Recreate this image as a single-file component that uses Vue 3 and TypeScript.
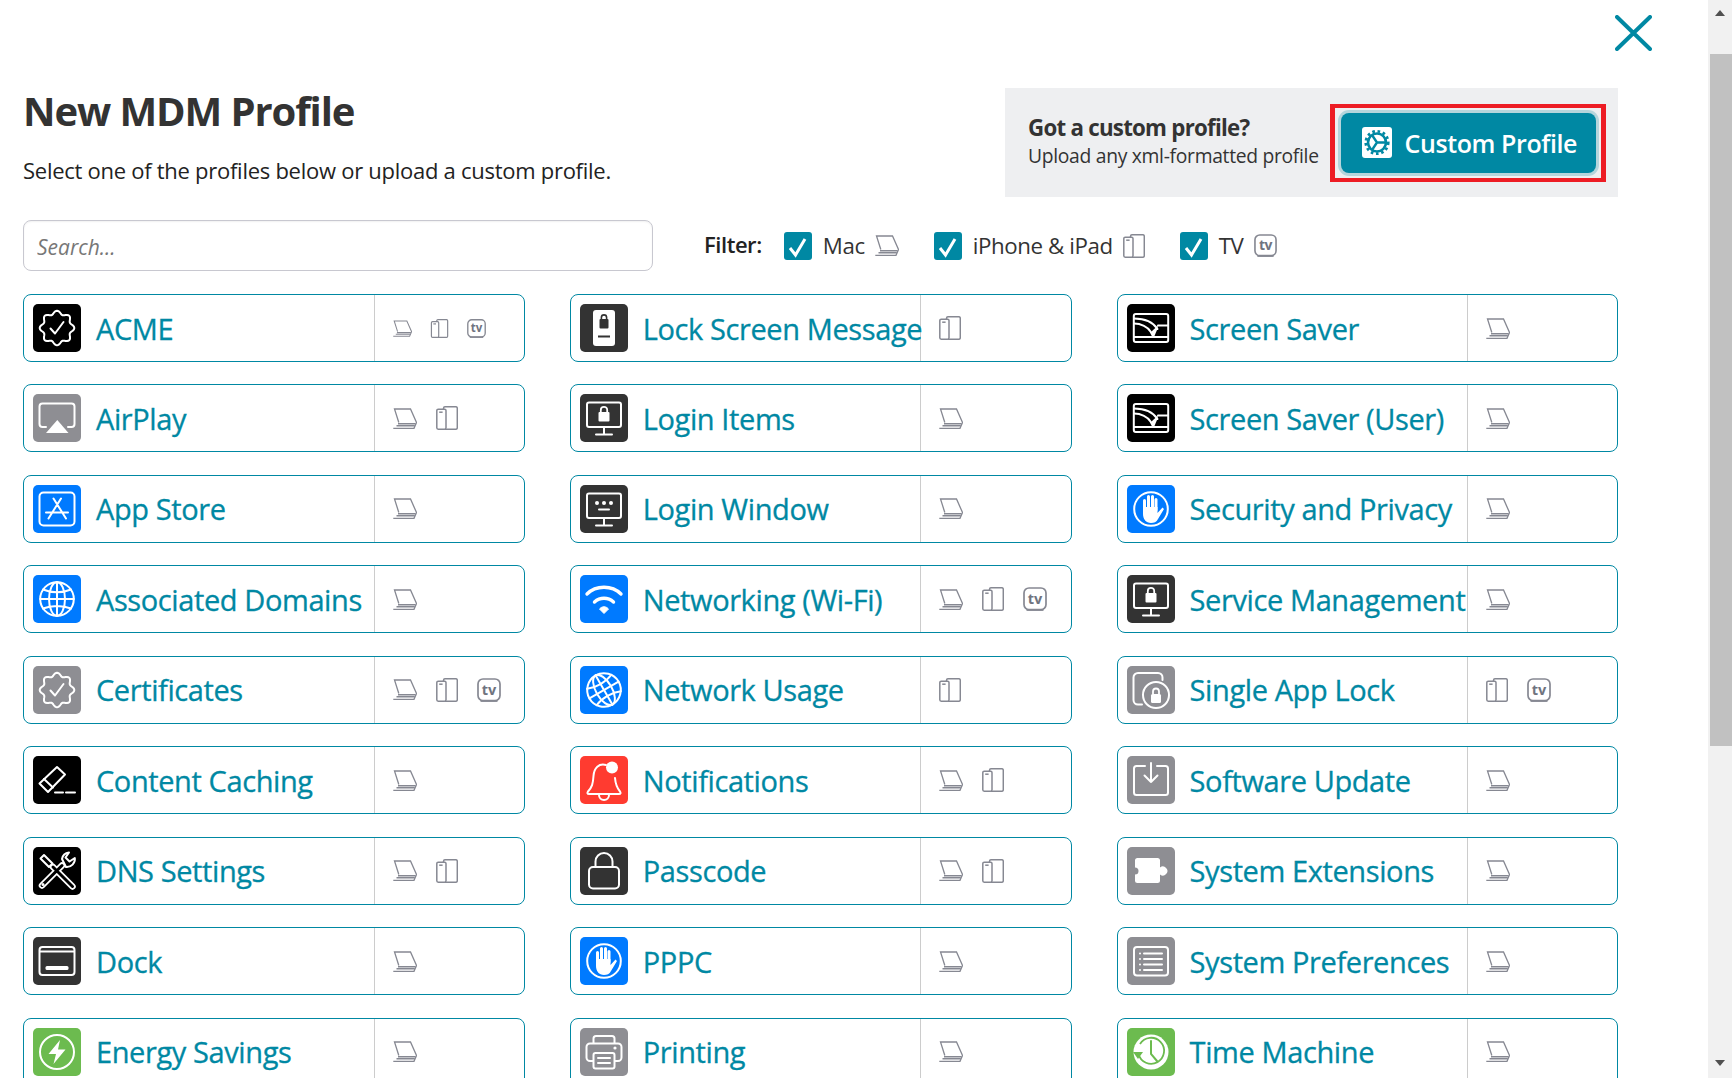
<template>
  <div class="page">
    <main class="main">
      <div class="close-row">
        <svg class="close" viewBox="0 0 37 36" fill="none" stroke="#0088a3" stroke-width="4" stroke-linecap="round">
          <path d="M2 2L35 34M35 2L2 34" />
        </svg>
      </div>

      <header class="head">
        <div class="head-text">
          <h1>New MDM Profile</h1>
          <p>Select one of the profiles below or upload a custom profile.</p>
        </div>
        <div class="promo">
          <div class="promo-text">
            <strong>Got a custom profile?</strong>
            <span>Upload any xml-formatted profile</span>
          </div>
          <div class="promo-mark">
            <button class="custom-btn" type="button">
              <svg class="gear" viewBox="0 0 30 31">
                <rect width="30" height="31" rx="3" fill="#fff" />
                <circle cx="15" cy="15.5" r="9" fill="none" stroke="#0088a3" stroke-width="2.6" />
                <circle cx="15" cy="15.5" r="11.2" fill="none" stroke="#0088a3" stroke-width="2.8" stroke-dasharray="2.6 2.7" />
                <path d="M10 8L15 15.5L10 23M15 15.5H24" fill="none" stroke="#0088a3" stroke-width="2.4" />
              </svg>
              Custom Profile
            </button>
          </div>
        </div>
      </header>

      <section class="filters">
        <input class="search" type="text" placeholder="Search..." />
        <span class="filter-label">Filter:</span>
        <label v-for="f in filters" :key="f.label" class="filter">
          <svg class="check" viewBox="0 0 28 28">
            <rect width="28" height="28" rx="3" fill="#0088a3" />
            <path d="M6 16L11.5 23L21 7" fill="none" stroke="#fff" stroke-width="3" />
          </svg>
          <span class="filter-name">{{ f.label }}</span>
          <svg class="device" :class="'device-' + f.device" :viewBox="deviceBox[f.device]" v-html="deviceArt[f.device]" />
        </label>
      </section>

      <section class="grid">
        <div v-for="p in profiles" :key="p.name" class="card">
          <div class="card-main">
            <svg class="tile" viewBox="0 0 48 48" :style="{ background: tileColors[p.tile] }" v-html="glyphs[p.glyph]" />
            <span class="card-name">{{ p.name }}</span>
          </div>
          <div class="card-devices" :class="{ small: p.small }">
            <svg
              v-for="d in p.devices"
              :key="d"
              class="device"
              :class="'device-' + d"
              :viewBox="deviceBox[d]"
              v-html="deviceArt[d]"
            />
          </div>
        </div>
      </section>
    </main>

    <aside class="scrollbar">
      <div class="arrow up" />
      <div class="thumb" />
      <div class="rest" />
      <div class="arrow down" />
    </aside>
  </div>
</template>

<script setup lang="ts">
type Device = 'mac' | 'phone' | 'tv';
type Tile = 'black' | 'dark' | 'gray' | 'blue' | 'green' | 'red';

interface Profile {
  name: string;
  glyph: string;
  tile: Tile;
  devices: Device[];
  small?: boolean;
}

const tileColors: Record<Tile, string> = {
  black: '#000000',
  dark: '#333333',
  gray: '#8e8e93',
  blue: '#007aff',
  green: '#6cbb4f',
  red: '#ff3b30',
};

const filters: { label: string; device: Device }[] = [
  { label: 'Mac', device: 'mac' },
  { label: 'iPhone & iPad', device: 'phone' },
  { label: 'TV', device: 'tv' },
];

const deviceBox: Record<Device, string> = {
  mac: '0 0 24 21',
  phone: '0 0 22 24',
  tv: '0 0 24 24',
};

const deviceArt: Record<Device, string> = {
  mac: `<g fill="none" stroke="#868892" stroke-width="1.3">
    <path d="M5.8 14.5L1.5 1H17.5L23.5 14.5L21 20.3H.3"/>
    <path d="M5 15.8H22.6M3.5 17.8H21.8" stroke-width="1.5"/>
  </g>`,
  phone: `<g fill="none" stroke="#868892" stroke-width="1.5">
    <path d="M7.5 3V2.2A1.5 1.5 0 0 1 9 .8H20A1.5 1.5 0 0 1 21.3 2.2V21.8A1.5 1.5 0 0 1 20 23.2H9"/>
    <rect x=".8" y="3.2" width="9.2" height="20" rx="1.4"/>
    <path d="M3.2 6.2H6.6"/>
  </g>`,
  tv: `<rect x="1" y="1" width="22" height="21.6" rx="5" fill="#fff" stroke="#868892" stroke-width="1.7"/>
    <path d="M3.5 23H20.5" stroke="#868892" stroke-width="1.8"/>
    <text x="12" y="16.5" text-anchor="middle" font-family="Open Sans, sans-serif" font-weight="700" font-size="14.5" fill="#6f7480">tv</text>`,
};

// scalloped badge for ACME / Certificates
function badgePath(): string {
  const pts: string[] = [];
  for (let i = 0; i <= 96; i++) {
    const a = (i / 96) * Math.PI * 2;
    const r = 15.6 + 1.7 * Math.cos(8 * a);
    const x = 24 + r * Math.sin(a);
    const y = 24 - r * Math.cos(a);
    pts.push(`${x.toFixed(2)} ${y.toFixed(2)}`);
  }
  return `M${pts.join('L')}Z`;
}

const w = 'fill="none" stroke="#fff" stroke-width="2" stroke-linecap="round" stroke-linejoin="round"';

const monitor = `<rect x="7" y="8.5" width="34" height="24.5" rx="2" ${w}/>
  <path d="M24 33V40M16 40.5H32" ${w} stroke-width="2.4"/>`;
const lockSmall = `<rect x="18.5" y="18" width="11" height="9.5" rx="1" fill="#fff"/>
  <path d="M20.8 18V16a3.2 3.2 0 0 1 6.4 0V18" fill="none" stroke="#fff" stroke-width="1.8"/>`;
const hand = `<circle cx="24" cy="24" r="16.8" ${w}/>
  <path d="M17.5 26V15.5M21.5 24V11.5M25.5 24V11.5M29 25V14.5" fill="none" stroke="#fff" stroke-width="3" stroke-linecap="round"/>
  <path d="M16 22H30.5V28L35.5 22.5L37 24L31 34C29.5 37 27 38 24 38C19 38 16 34 16 29Z" fill="#fff"/>`;
const screenSaver = `<rect x="6.8" y="10" width="34.4" height="28" rx="2" ${w}/>
  <path d="M7 33H41M31 21.5H41" ${w}/>
  <path d="M7 14.5C17 14.5 26 18 30.5 25M7 19.5C14 19.5 21 23 23.5 27.5L26.5 33" ${w}/>
  <path d="M31 21.5L30 26L27 33L24 28Z" fill="#fff"/>`;

const globeLines = `<circle cx="24" cy="24" r="16.8"/><ellipse cx="24" cy="24" rx="8" ry="16.8"/>
  <path d="M24 7V41M7.2 24H40.8M10 14.5C18 18 30 18 38 14.5M10 33.5C18 30 30 30 38 33.5"/>`;

const glyphs: Record<string, string> = {
  badge: `<path d="${badgePath()}" ${w}/><path d="M17.5 24.5L22 29.5L30.5 18" ${w} stroke-width="2.2"/>`,
  airplay: `<path d="M13 33H9.5A3 3 0 0 1 6.5 30V12.5A3 3 0 0 1 9.5 9.5H38.5A3 3 0 0 1 41.5 12.5V30A3 3 0 0 1 38.5 33H35" ${w}/>
    <path d="M24.3 26L35.5 39H13Z" fill="#fff"/>`,
  appstore: `<rect x="6.5" y="7.5" width="35" height="33" rx="4" ${w}/>
    <path d="M20.5 13.5L33 33.5M28 13.5L15.5 33.5M13 27.5H35" ${w} stroke-width="2.4"/>`,
  globe: `<g ${w} stroke-width="1.8">${globeLines}</g>`,
  netglobe: `<g ${w} stroke-width="1.8" transform="rotate(-30 24 24)">${globeLines}</g>`,
  eraser: `<path d="M6.5 27.5L24 11L32 18.5L15 36Z" ${w} />
    <path d="M11 23L20 31.5" ${w}/>
    <path d="M22 36.5H30M33 36.5H42" ${w}/>`,
  tools: `<path d="M9 38.5L29 18.5M39.5 39.5L20 20" fill="none" stroke="#fff" stroke-width="6.5" stroke-linecap="round"/>
    <path d="M11 8L7.5 11.5L16 20L19.5 16.5Z" fill="#000" stroke="#fff" stroke-width="2" stroke-linejoin="round"/>
    <path d="M29 12A8 8 0 0 1 36 5.5L32.5 10.5L36.5 14.5L41.8 11A8 8 0 0 1 33 20Z" fill="#000" stroke="#fff" stroke-width="2" stroke-linejoin="round"/>
    <path d="M9 38.5L29 18.5M39.5 39.5L20 20" fill="none" stroke="#000" stroke-width="3" stroke-linecap="round"/>
    <circle cx="10" cy="37.5" r="1.5" fill="#fff"/>`,
  dock: `<rect x="6.5" y="10" width="35" height="28" rx="3" ${w} stroke-width="2.2"/>
    <path d="M7 14.5H41" ${w} stroke-width="1.6"/>
    <rect x="12.5" y="29" width="23" height="4" rx="1.5" fill="#fff"/>`,
  energy: `<circle cx="24" cy="24" r="17" ${w} stroke-width="2.2"/>
    <path d="M27 12L15.5 26H23L20.5 36L32.5 21.5H25Z" fill="#fff"/>`,
  lockscreen: `<rect x="13" y="6" width="22" height="36" rx="3" fill="#fff"/>
    <rect x="19.5" y="15" width="9" height="9.5" rx="1" fill="#333"/>
    <path d="M21.4 15.5V13.5a2.6 2.6 0 0 1 5.2 0V15.5" fill="none" stroke="#333" stroke-width="1.6"/>
    <path d="M18 32.5H30" stroke="#333" stroke-width="1.8"/>`,
  monitorlock: `${monitor}${lockSmall}`,
  monitorlogin: `${monitor}<circle cx="17" cy="18" r="2" fill="#fff"/><circle cx="24" cy="18" r="2" fill="#fff"/><circle cx="31" cy="18" r="2" fill="#fff"/>
    <path d="M19 24.5H29" ${w}/>`,
  wifi: `<path d="M7 19C16 10 32 10 41 19M14.5 27C20 22 28 22 33.5 27" fill="none" stroke="#fff" stroke-width="3.4" stroke-linecap="round"/>
    <path d="M19.5 34C22 31 26 31 28.5 34L24 38.5Z" fill="#fff" stroke="#fff" stroke-linejoin="round"/>`,
  bell: `<path d="M26 9C19 7 14 12 13.5 20C13 28 12 31 8 35.5Q6.5 38 9 38H39Q41.5 38 40 35.5C37 32 35.5 28 35 22" ${w}/>
    <path d="M19 39A5 5 0 0 0 29 39" ${w}/>
    <circle cx="32" cy="11.5" r="6" fill="#fff"/>`,
  passcode: `<rect x="9" y="20" width="30" height="21.5" rx="4" ${w} stroke-width="3"/>
    <path d="M15.5 19.5V14.5a8.5 8.5 0 0 1 17 0V19.5" ${w} stroke-width="3"/>`,
  hand,
  printer: `<path d="M13.5 15V10.5A2.5 2.5 0 0 1 16 8H32A2.5 2.5 0 0 1 34.5 10.5V15" ${w}/>
    <path d="M13 33H10A3.5 3.5 0 0 1 6.5 29.5V19A3.5 3.5 0 0 1 10 15.5H38A3.5 3.5 0 0 1 41.5 19V29.5A3.5 3.5 0 0 1 38 33H35" ${w}/>
    <rect x="13.5" y="25" width="21" height="15.5" rx="2" ${w}/>
    <path d="M18 30H30M18 35H30" ${w} stroke-width="1.8"/>
    <circle cx="35" cy="20" r="1.6" fill="#fff"/>`,
  screensaver: screenSaver,
  applock: `<path d="M15 38.5H11A4.5 4.5 0 0 1 6.5 34V11.5A4.5 4.5 0 0 1 11 7H31A4.5 4.5 0 0 1 35.5 11.5V14" ${w}/>
    <circle cx="29" cy="29" r="13" ${w}/>
    <rect x="24" y="28" width="10" height="9" rx="1.5" fill="#fff"/>
    <path d="M26 28V25.5a3 3 0 0 1 6 0V28" fill="none" stroke="#fff" stroke-width="1.8"/>`,
  update: `<path d="M18 10H9.5A2.5 2.5 0 0 0 7 12.5V36.5A2.5 2.5 0 0 0 9.5 39H38.5A2.5 2.5 0 0 0 41 36.5V12.5A2.5 2.5 0 0 0 38.5 10H30" ${w}/>
    <path d="M24 7V26M17.5 19.5L24 26L30.5 19.5" ${w}/>`,
  puzzle: `<path d="M10.5 11H30.5A2.5 2.5 0 0 1 33 13.5V20.5A4.5 4.5 0 1 1 33 27.5V33.5A2.5 2.5 0 0 1 30.5 36H10.5A2.5 2.5 0 0 1 8 33.5V27.5A3.5 3.5 0 1 0 8 20.5V13.5A2.5 2.5 0 0 1 10.5 11Z" fill="#fff"/>`,
  prefs: `<rect x="7" y="10" width="34" height="28.5" rx="3" ${w}/>
    <path d="M17 16.5H35M17 22H35M17 27.5H35M17 33H35" ${w} stroke-width="1.8"/>
    <path d="M13 16.5V16.6M13 22V22.1M13 27.5V27.6M13 33V33.1" ${w}/>`,
  timemachine: `<circle cx="24" cy="24" r="17.5" fill="#fff"/>
    <path d="M11.5 26A13 13 0 1 0 13 16" fill="none" stroke="#6cbb4f" stroke-width="1.8"/>
    <path d="M6 24H16L11 31Z" fill="#6cbb4f"/>
    <path d="M24 13V26L30 33" fill="none" stroke="#6cbb4f" stroke-width="2" stroke-linecap="round"/>`,
};

const profiles: Profile[] = [
  { name: 'ACME', glyph: 'badge', tile: 'black', devices: ['mac', 'phone', 'tv'], small: true },
  { name: 'AirPlay', glyph: 'airplay', tile: 'gray', devices: ['mac', 'phone'] },
  { name: 'App Store', glyph: 'appstore', tile: 'blue', devices: ['mac'] },
  { name: 'Associated Domains', glyph: 'globe', tile: 'blue', devices: ['mac'] },
  { name: 'Certificates', glyph: 'badge', tile: 'gray', devices: ['mac', 'phone', 'tv'] },
  { name: 'Content Caching', glyph: 'eraser', tile: 'black', devices: ['mac'] },
  { name: 'DNS Settings', glyph: 'tools', tile: 'black', devices: ['mac', 'phone'] },
  { name: 'Dock', glyph: 'dock', tile: 'dark', devices: ['mac'] },
  { name: 'Energy Savings', glyph: 'energy', tile: 'green', devices: ['mac'] },
  { name: 'Lock Screen Message', glyph: 'lockscreen', tile: 'dark', devices: ['phone'] },
  { name: 'Login Items', glyph: 'monitorlock', tile: 'dark', devices: ['mac'] },
  { name: 'Login Window', glyph: 'monitorlogin', tile: 'dark', devices: ['mac'] },
  { name: 'Networking (Wi-Fi)', glyph: 'wifi', tile: 'blue', devices: ['mac', 'phone', 'tv'] },
  { name: 'Network Usage', glyph: 'netglobe', tile: 'blue', devices: ['phone'] },
  { name: 'Notifications', glyph: 'bell', tile: 'red', devices: ['mac', 'phone'] },
  { name: 'Passcode', glyph: 'passcode', tile: 'dark', devices: ['mac', 'phone'] },
  { name: 'PPPC', glyph: 'hand', tile: 'blue', devices: ['mac'] },
  { name: 'Printing', glyph: 'printer', tile: 'gray', devices: ['mac'] },
  { name: 'Screen Saver', glyph: 'screensaver', tile: 'black', devices: ['mac'] },
  { name: 'Screen Saver (User)', glyph: 'screensaver', tile: 'black', devices: ['mac'] },
  { name: 'Security and Privacy', glyph: 'hand', tile: 'blue', devices: ['mac'] },
  { name: 'Service Management', glyph: 'monitorlock', tile: 'dark', devices: ['mac'] },
  { name: 'Single App Lock', glyph: 'applock', tile: 'gray', devices: ['phone', 'tv'] },
  { name: 'Software Update', glyph: 'update', tile: 'gray', devices: ['mac'] },
  { name: 'System Extensions', glyph: 'puzzle', tile: 'gray', devices: ['mac'] },
  { name: 'System Preferences', glyph: 'prefs', tile: 'gray', devices: ['mac'] },
  { name: 'Time Machine', glyph: 'timemachine', tile: 'green', devices: ['mac'] },
];
</script>

<style>
html,
body {
  margin: 0;
  height: 100%;
  overflow: hidden;
  background: #fff;
}
</style>

<style scoped>
.page {
  display: flex;
  height: 100vh;
  overflow: hidden;
  font-family: "Open Sans", "Noto Sans", sans-serif;
  color: #333;
}

.main {
  flex: 1;
  min-width: 0;
  padding: 0 90px 0 23px;
}

.close-row {
  display: flex;
  justify-content: flex-end;
  height: 88px;
  padding-top: 15px;
  box-sizing: border-box;
}

.close {
  width: 37px;
  height: 36px;
  margin-right: -34px;
}

.head {
  display: flex;
  justify-content: space-between;
  height: 109px;
}

.head h1 {
  margin: 0;
  font-size: 40px;
  line-height: 45px;
  font-weight: 700;
  letter-spacing: -1.1px;
  color: #333;
}

.head p {
  margin: 23px 0 0;
  font-size: 22px;
  line-height: 28px;
  letter-spacing: -0.27px;
  color: #222;
}

.promo {
  display: flex;
  align-items: center;
  width: 613px;
  height: 109px;
  box-sizing: border-box;
  padding-left: 23px;
  background: #eeeff1;
}

.promo-text {
  display: flex;
  flex-direction: column;
  flex: 1;
  padding-bottom: 2px;
  font-size: 19.3px;
  line-height: 28px;
  letter-spacing: -0.3px;
}

.promo-text strong {
  font-size: 22.3px;
  font-weight: 700;
  letter-spacing: -0.75px;
}

.promo-mark {
  width: 276px;
  height: 78px;
  margin-right: 12px;
  box-sizing: border-box;
  border: solid #ed1c24;
  border-width: 4px 5px;
  padding: 5px 5.5px;
}

.custom-btn {
  display: flex;
  align-items: center;
  gap: 13px;
  width: 100%;
  height: 60px;
  box-sizing: border-box;
  padding: 0 0 0 21px;
  background: #0088a3;
  border: none;
  border-radius: 8px;
  box-shadow: 0 0 0 3px #b5d5dc;
  color: #fff;
  font-family: inherit;
  font-size: 25px;
  font-weight: 600;
  letter-spacing: -0.4px;
}

.gear {
  width: 30px;
  height: 31px;
  flex: none;
}

.filters {
  display: flex;
  align-items: center;
  height: 51px;
  margin-top: 23px;
}

.search {
  width: 630px;
  height: 51px;
  box-sizing: border-box;
  padding: 2px 13px 0;
  border: 1px solid #c8c8d0;
  border-radius: 8px;
  outline: none;
  font-family: inherit;
  font-size: 21px;
  font-style: italic;
  box-shadow: inset 0 1px 2px rgba(0, 0, 0, 0.06);
}

.search::placeholder {
  color: #777;
}

.filter-label {
  margin: 0 22px 0 51px;
  font-size: 22px;
  font-weight: 600;
  letter-spacing: -0.45px;
  color: #222;
  position: relative;
  top: -2px;
}

.filter {
  display: flex;
  align-items: center;
  color: #333;
  font-size: 22.3px;
  letter-spacing: -0.4px;
  margin-right: 35px;
}

.check {
  width: 28px;
  height: 28px;
  flex: none;
  margin-right: 11px;
}

.filter-name {
  margin-right: 10px;
}

.filter .device-tv {
  width: 23px;
  height: 23px;
}

.grid {
  display: grid;
  grid-auto-flow: column;
  grid-template-rows: repeat(9, 68px);
  grid-template-columns: repeat(3, 501.8px);
  column-gap: 45px;
  row-gap: 22.45px;
  margin-top: 23px;
}

.card {
  display: flex;
  box-sizing: border-box;
  height: 68px;
  border: 1px solid #0088a3;
  border-radius: 8px;
  background: #fff;
}

.card-main {
  display: flex;
  align-items: center;
  gap: 15px;
  width: 350.5px;
  flex: none;
  box-sizing: border-box;
  padding-left: 9px;
  border-right: 1px solid #ccc;
}

.tile {
  width: 48px;
  height: 48px;
  flex: none;
  border-radius: 5px;
}

.card-name {
  font-size: 29px;
  line-height: 1;
  font-weight: 500;
  letter-spacing: -0.4px;
  -webkit-text-stroke: 0.3px #0088a3;
  color: #0088a3;
  white-space: nowrap;
}

.card-devices {
  display: flex;
  align-items: center;
  gap: 19px;
  padding-left: 18px;
}

.device {
  flex: none;
}

.device-mac {
  width: 24px;
  height: 21px;
}

.device-phone {
  width: 22px;
  height: 24px;
}

.device-tv {
  width: 24px;
  height: 24px;
}

.card-devices.small {
  gap: 18px;
}

.card-devices.small .device {
  width: 19px;
  height: 19px;
}

.scrollbar {
  display: flex;
  flex-direction: column;
  width: 24px;
  flex: none;
  background: #f1f1f1;
}

.arrow {
  height: 26px;
  flex: none;
  position: relative;
}

.arrow::after {
  content: "";
  position: absolute;
  left: 7px;
  border-left: 5px solid transparent;
  border-right: 5px solid transparent;
}

.arrow.up::after {
  top: 10px;
  border-bottom: 6px solid #505050;
}

.arrow.down::after {
  top: 8px;
  border-top: 6px solid #505050;
}

.thumb {
  height: 692px;
  margin: 28px 0 0 2px;
  background: #c1c1c1;
}

.rest {
  flex: 1;
}
</style>
